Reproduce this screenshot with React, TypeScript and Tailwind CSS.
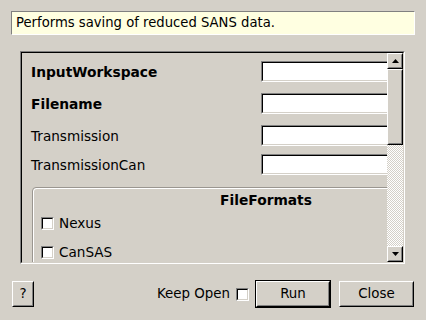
import React from "react";

function Sunken({ className = "", children }: { className?: string; children?: React.ReactNode }) {
  return (
    <div className={"border border-t-[#808080] border-l-[#808080] border-b-white border-r-white " + className}>
      <div className="w-full h-full border border-t-black border-l-black border-b-[#d4d0c8] border-r-[#d4d0c8] bg-white">
        {children}
      </div>
    </div>
  );
}

function Check() {
  return (
    <div className="w-[13px] h-[13px] shrink-0 border border-t-[#808080] border-l-[#808080] border-b-white border-r-white">
      <div className="w-full h-full bg-white border border-t-black border-l-black border-b-[#d4d0c8] border-r-[#d4d0c8]" />
    </div>
  );
}

function Raised({ className = "", children }: { className?: string; children?: React.ReactNode }) {
  return (
    <div className={"border border-t-white border-l-white border-b-black border-r-black bg-[#d4d0c8] " + className}>
      <div className="w-full h-full flex items-center justify-center border border-t-[#d4d0c8] border-l-[#d4d0c8] border-b-[#808080] border-r-[#808080]">
        {children}
      </div>
    </div>
  );
}

function Row({ label, bold, className = "" }: { label: string; bold?: boolean; className?: string }) {
  return (
    <div className={"flex items-center h-[21px] " + className}>
      <div className={"w-[230px] shrink-0 leading-none pt-[3px] " + (bold ? "font-bold text-[13.8px]" : "text-[13.6px]")}>{label}</div>
      <Sunken className="w-[200px] h-[21px] shrink-0" />
    </div>
  );
}

export default function App() {
  return (
    <div className="w-[426px] h-[320px] bg-[#d4d0c8] flex flex-col text-black text-[13.4px] overflow-hidden font-['DejaVu_Sans',sans-serif]">
      <div className="mx-[11px] mt-[11px] h-[24px] bg-[#ffffe1] border border-t-[#808080] border-l-[#808080] border-b-white border-r-white flex items-center pl-[4px] leading-none text-[13.2px]">
        Performs saving of reduced SANS data.
      </div>

      <div className="ml-[20px] mt-[16px] w-[385px] h-[213px] shrink-0 border border-t-[#808080] border-l-[#808080] border-b-white border-r-white">
        <div className="w-full h-full flex border border-t-black border-l-black border-b-[#d4d0c8] border-r-[#d4d0c8]">
          <div className="flex-1 overflow-hidden">
            <div className="w-[490px] pl-[9px] pt-[8px]">
              <Row label="InputWorkspace" bold />
              <Row label="Filename" bold className="mt-[11px]" />
              <Row label="Transmission" className="mt-[11px]" />
              <Row label="TransmissionCan" className="mt-[8px]" />
              <div className="ml-[1px] mt-[12px] w-[468px] h-[100px] rounded-[4px] border border-[#9a9690] shadow-[inset_1px_1px_0_#ffffff]">
                <div className="pt-[5px] h-[20px] text-center font-bold text-[13.8px] leading-[15px]">FileFormats</div>
                <div className="pl-[8px] mt-[9px] flex items-center h-[13px]">
                  <Check />
                  <span className="ml-[5px] leading-none pt-[1px] text-[13.6px]">Nexus</span>
                </div>
                <div className="pl-[8px] mt-[16px] flex items-center h-[13px]">
                  <Check />
                  <span className="ml-[5px] leading-none pt-[1px] text-[13.6px]">CanSAS</span>
                </div>
              </div>
            </div>
          </div>
          <div className="w-[16px] shrink-0 flex flex-col">
            <Raised className="h-[16px] shrink-0">
              <svg width="7" height="4" viewBox="0 0 7 4"><polygon points="0,4 7,4 3.5,0" fill="#000" /></svg>
            </Raised>
            <Raised className="h-[76px] shrink-0" />
            <div className="flex-1 bg-[repeating-conic-gradient(#ffffff_0%_25%,#d4d0c8_0%_50%)] bg-[length:2px_2px]" />
            <Raised className="h-[16px] shrink-0">
              <svg width="7" height="4" viewBox="0 0 7 4"><polygon points="0,0 7,0 3.5,4" fill="#000" /></svg>
            </Raised>
          </div>
        </div>
      </div>

      <div className="mt-[16px] h-[28px] flex items-center pl-[12px] pr-[12px]">
        <Raised className="w-[22px] h-[26px]">
          <span className="leading-none">?</span>
        </Raised>
        <div className="flex-1" />
        <span className="leading-none">Keep Open</span>
        <div className="ml-[6px]"><Check /></div>
        <div className="ml-[6px] w-[76px] h-[28px] border border-black">
          <Raised className="w-full h-full">
            <span className="leading-none">Run</span>
          </Raised>
        </div>
        <Raised className="ml-[8px] w-[75px] h-[26px]">
          <span className="leading-none">Close</span>
        </Raised>
      </div>
    </div>
  );
}
